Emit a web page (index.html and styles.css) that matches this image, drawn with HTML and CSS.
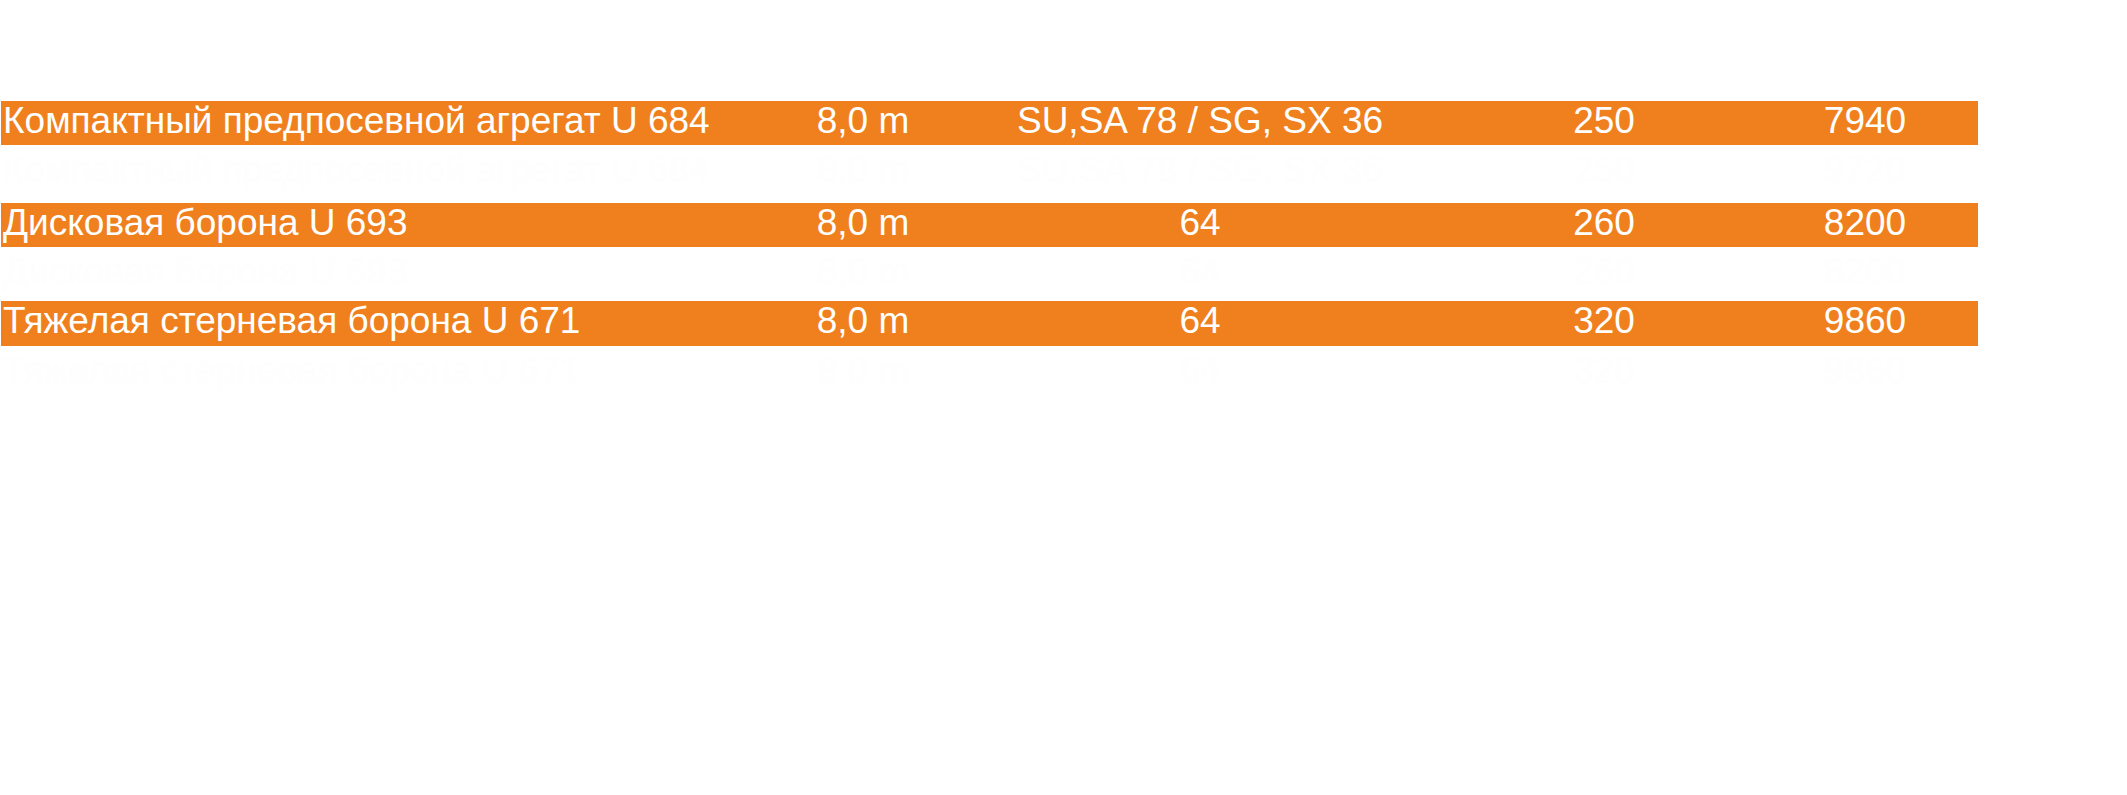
FILE: index.html
```html
<!DOCTYPE html>
<html lang="ru">
<head>
<meta charset="utf-8">
<title>Таблица</title>
<link rel="stylesheet" href="styles.css">
</head>
<body>
<div class="table">
  <div class="row row--orange">
    <div class="cell cell--name">Компактный предпосевной агрегат U 684</div>
    <div class="cell">8,0 m</div>
    <div class="cell">SU,SA 78 / SG, SX 36</div>
    <div class="cell">250</div>
    <div class="cell">7940</div>
  </div>
  <div class="row row--ghost row--tall">
    <div class="cell cell--name">Компактный предпосевной агрегат U 684</div>
    <div class="cell">8,0 m</div>
    <div class="cell">SU,SA 78 / SG, SX 36</div>
    <div class="cell">250</div>
    <div class="cell">9720</div>
  </div>
  <div class="row row--orange">
    <div class="cell cell--name">Дисковая борона U 693</div>
    <div class="cell">8,0 m</div>
    <div class="cell">64</div>
    <div class="cell">260</div>
    <div class="cell">8200</div>
  </div>
  <div class="row row--ghost row--short">
    <div class="cell cell--name">Дисковая борона U 693</div>
    <div class="cell">8,0 m</div>
    <div class="cell">64</div>
    <div class="cell">260</div>
    <div class="cell">8200</div>
  </div>
  <div class="row row--orange row--last">
    <div class="cell cell--name">Тяжелая стерневая борона U 671</div>
    <div class="cell">8,0 m</div>
    <div class="cell">64</div>
    <div class="cell">320</div>
    <div class="cell">9860</div>
  </div>
  <div class="row row--ghost">
    <div class="cell cell--name">Тяжелая стерневая борона U 671</div>
    <div class="cell">8,0 m</div>
    <div class="cell">64</div>
    <div class="cell">320</div>
    <div class="cell">9860</div>
  </div>
</div>
</body>
</html>
```
FILE: styles.css
```css
html, body {
  margin: 0;
  padding: 0;
  background: #ffffff;
}

body {
  font-family: "Liberation Sans", Arial, sans-serif;
}

.table {
  display: flex;
  flex-direction: column;
  padding-top: 101px;
  padding-left: 1px;
  width: 1977px;
}

.row {
  display: grid;
  grid-template-columns: 781px 162px 512px 296px 226px;
  font-size: 37px;
  white-space: nowrap;
}

.row--orange {
  height: 44px;
  line-height: 40px;
  background: #ef801d;
  color: #ffffff;
}

.row--last {
  height: 45px;
}

.row--ghost {
  height: 56px;
  line-height: 50px;
  background: #ffffff;
  color: #fefefe;
}

.row--tall {
  height: 58px;
}

.row--short {
  height: 54px;
}

.cell {
  text-align: center;
}

.cell--name {
  text-align: left;
  padding-left: 2px;
}
```
